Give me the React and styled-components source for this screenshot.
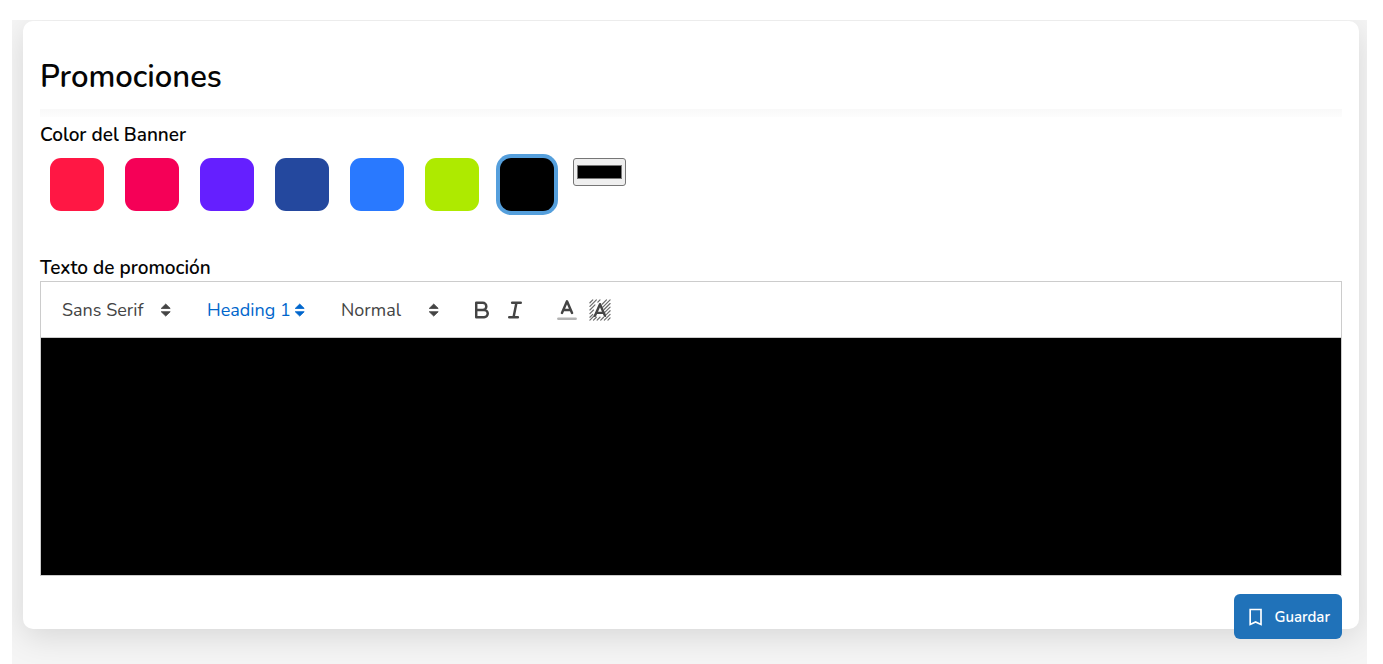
import React, { useState } from "react";
import styled, { createGlobalStyle } from "styled-components";

const GlobalStyle = createGlobalStyle`
  *, *::before, *::after { box-sizing: border-box; }
  body {
    margin: 0;
    background: #fff;
    color: #050505;
    font-family: Nunito, "Open Sans", "Noto Sans", sans-serif;
  }
  button, input, select, textarea { font-family: inherit; }
`;

const Page = styled.div`
  min-height: 100vh;
  padding: 20px 16px 0 12px;
`;

const Stage = styled.main`
  min-height: calc(100vh - 20px);
  padding: 1px 8px 35px 11px;
  background: #f5f5f5;
  overflow: hidden;
`;

const Card = styled.form`
  padding: 37px 17px 0;
  background: #fff;
  border-radius: 10px;
  box-shadow: 0 8px 32px rgba(0, 0, 0, 0.12);
`;

const Title = styled.h1`
  margin: 0;
  font-size: 31px;
  line-height: 38px;
  font-weight: 600;
`;

const Divider = styled.hr`
  height: 8px;
  margin: 13px 0 5px;
  border: 0;
  background: linear-gradient(#f9f9f9, #fdfdfd);
`;

const Label = styled.label`
  display: block;
  width: fit-content;
  font-size: 19px;
  line-height: 26px;
  font-weight: 600;
`;

const BannerColors = styled.div`
  display: flex;
  align-items: flex-start;
  gap: 19px;
  padding: 10px 10px 0;
  margin-bottom: 44px;
`;

const Swatches = styled.div`
  display: flex;
  gap: 21px;
`;

const Swatch = styled.button`
  width: 54px;
  height: 53px;
  padding: 0;
  border: 0;
  border-radius: 11px;
  background: ${(p) => p.$color};
  box-shadow: ${(p) => (p.$active ? "0 0 0 4px #559fdc" : "none")};
  cursor: pointer;
`;

const ColorInput = styled.input`
  width: 53px;
  height: 28px;
  padding: 3px;
  border: 1px solid #767676;
  border-radius: 3px;
  background: #efefef;
  &::-webkit-color-swatch-wrapper { padding: 3px 0; }
  &::-webkit-color-swatch { border: 1px solid #777; }
`;

const Toolbar = styled.div`
  display: flex;
  align-items: center;
  gap: 19px;
  height: 56px;
  padding: 0 11px;
  border: 1px solid #ccc;
  border-bottom: 0;
`;

const Picker = styled.span`
  display: flex;
  align-items: center;
  width: ${(p) => p.$width}px;
  color: ${(p) => (p.$active ? "#06c" : "#444")};
`;

const PickerSelect = styled.select`
  width: 100%;
  height: 32px;
  padding: 0 16px 0 10px;
  margin-right: -26px;
  border: 0;
  appearance: none;
  background: transparent;
  color: inherit;
  font-size: 18px;
  line-height: 32px;
  cursor: pointer;
`;

const ButtonGroup = styled.div`
  display: flex;
`;

const ToolButton = styled.button`
  display: grid;
  place-items: center;
  width: 33px;
  height: 32px;
  padding: 0;
  border: 0;
  background: none;
  color: #444;
  cursor: pointer;
`;

const Glyph = styled.svg`
  flex: none;
  width: 26px;
  height: 26px;
  pointer-events: none;
  fill: none;
  stroke: currentColor;
  stroke-width: 1.7;
  stroke-linejoin: round;
`;

const Editor = styled.textarea`
  display: block;
  width: 100%;
  height: 239px;
  padding: 16px 20px;
  border: 1px solid #ccc;
  outline: none;
  resize: none;
  background: ${(p) => p.$color};
  color: #fff;
  font-size: 31px;
`;

const Footer = styled.footer`
  display: flex;
  justify-content: flex-end;
  padding-top: 18px;
`;

const SaveButton = styled.button`
  display: flex;
  align-items: center;
  justify-content: center;
  gap: 8px;
  height: 45px;
  padding: 0 12px;
  margin-bottom: -10px;
  border: 0;
  border-radius: 6px;
  background: #2072b9;
  color: #fff;
  font-size: 15px;
  font-weight: 600;
  cursor: pointer;
`;

const COLORS = [
  ["Rojo", "#ff1744"],
  ["Rosa", "#f50057"],
  ["Violeta", "#651fff"],
  ["Azul marino", "#24489e"],
  ["Azul", "#2979ff"],
  ["Lima", "#aeea00"],
  ["Negro", "#000000"],
];

const PICKERS = [
  { name: "Fuente", width: 126, options: ["Sans Serif", "Serif", "Monospace"] },
  { name: "Encabezado", width: 115, options: ["Heading 1", "Heading 2", "Normal"], active: true },
  { name: "Tamaño", width: 115, options: ["Normal", "Small", "Large", "Huge"] },
];

const Arrows = styled.path`
  fill: currentColor;
  stroke-width: 0.6;
`;

const ArrowsIcon = () => (
  <Glyph viewBox="0 0 18 18" aria-hidden="true">
    <Arrows d="M6.400 10.200l3.100 3 3.100-3zM6.400 7.900l3.100-3 3.100 3z" />
  </Glyph>
);

const BoldIcon = () => (
  <Glyph viewBox="0 0 18 18" aria-hidden="true">
    <path d="M5 4h4.500a2.500 2.500 0 0 1 0 5H5zM5 9h5.500a2.500 2.500 0 0 1 0 5H5z" />
  </Glyph>
);

const ItalicIcon = () => (
  <Glyph viewBox="0 0 18 18" strokeLinecap="round" aria-hidden="true">
    <path d="M7 4h6M5 14h6M8 14l2-10" />
  </Glyph>
);

const TextColorIcon = () => (
  <Glyph viewBox="0 0 18 18" strokeLinecap="round" aria-hidden="true">
    <path opacity=".4" d="M3 15h12" />
    <path d="M5.500 11L9 3l3.500 8M11.630 9H6.380" />
  </Glyph>
);

const Hatch = styled.path`
  stroke-width: 0.8;
  stroke-opacity: 0.8;
`;

const HighlightIcon = () => (
  <Glyph viewBox="0 0 18 18" strokeLinecap="round" aria-hidden="true">
    <Hatch d="M2 4l2-2M2 6.500L6.500 2M2 9l3.500-3.500M7.500 3.500L9 2M2 11.500l2.500-2.500M2 14l2-2M2 16l3-3M4.500 16l2-2M7 16l2-2M9.500 16l2-2M12 16l4-4M14.500 16l1.500-1.500M13.500 12L16 9.500M12.500 10.500L16 7M12 8.500l4-4M11 7l5-5M10.500 5l3-3" />
    <path d="M5.500 13L9 5l3.500 8M11.630 11H6.380" />
  </Glyph>
);

const BookmarkIcon = styled.svg`
  width: 20px;
  height: 20px;
  fill: none;
  stroke: currentColor;
  stroke-width: 2;
`;

export default function App() {
  const [color, setColor] = useState("#000000");

  return (
    <>
      <GlobalStyle />
      <Page>
        <Stage>
          <Card onSubmit={(e) => e.preventDefault()}>
            <Title>Promociones</Title>
            <Divider />
            <Label htmlFor="banner-color">Color del Banner</Label>
            <BannerColors>
              <Swatches>
                {COLORS.map(([name, value]) => (
                  <Swatch
                    key={value}
                    type="button"
                    aria-label={name}
                    aria-pressed={color === value}
                    $color={value}
                    $active={color === value}
                    onClick={() => setColor(value)}
                  />
                ))}
              </Swatches>
              <ColorInput
                id="banner-color"
                type="color"
                value={color}
                onChange={(e) => setColor(e.target.value)}
              />
            </BannerColors>
            <Label htmlFor="promo-text">Texto de promoción</Label>
            <Toolbar role="toolbar" aria-label="Formato">
              {PICKERS.map(({ name, width, options, active }) => (
                <Picker key={name} $width={width} $active={active}>
                  <PickerSelect aria-label={name}>
                    {options.map((o) => (
                      <option key={o}>{o}</option>
                    ))}
                  </PickerSelect>
                  <ArrowsIcon />
                </Picker>
              ))}
              <ButtonGroup>
                <ToolButton type="button" aria-label="Negrita"><BoldIcon /></ToolButton>
                <ToolButton type="button" aria-label="Cursiva"><ItalicIcon /></ToolButton>
              </ButtonGroup>
              <ButtonGroup>
                <ToolButton type="button" aria-label="Color de texto"><TextColorIcon /></ToolButton>
                <ToolButton type="button" aria-label="Color de fondo"><HighlightIcon /></ToolButton>
              </ButtonGroup>
            </Toolbar>
            <Editor id="promo-text" $color={color} />
            <Footer>
              <SaveButton type="submit">
                <BookmarkIcon viewBox="0 0 24 24" aria-hidden="true">
                  <path d="M5 3h13v18l-6.500-3L5 21z" />
                </BookmarkIcon>
                Guardar
              </SaveButton>
            </Footer>
          </Card>
        </Stage>
      </Page>
    </>
  );
}
